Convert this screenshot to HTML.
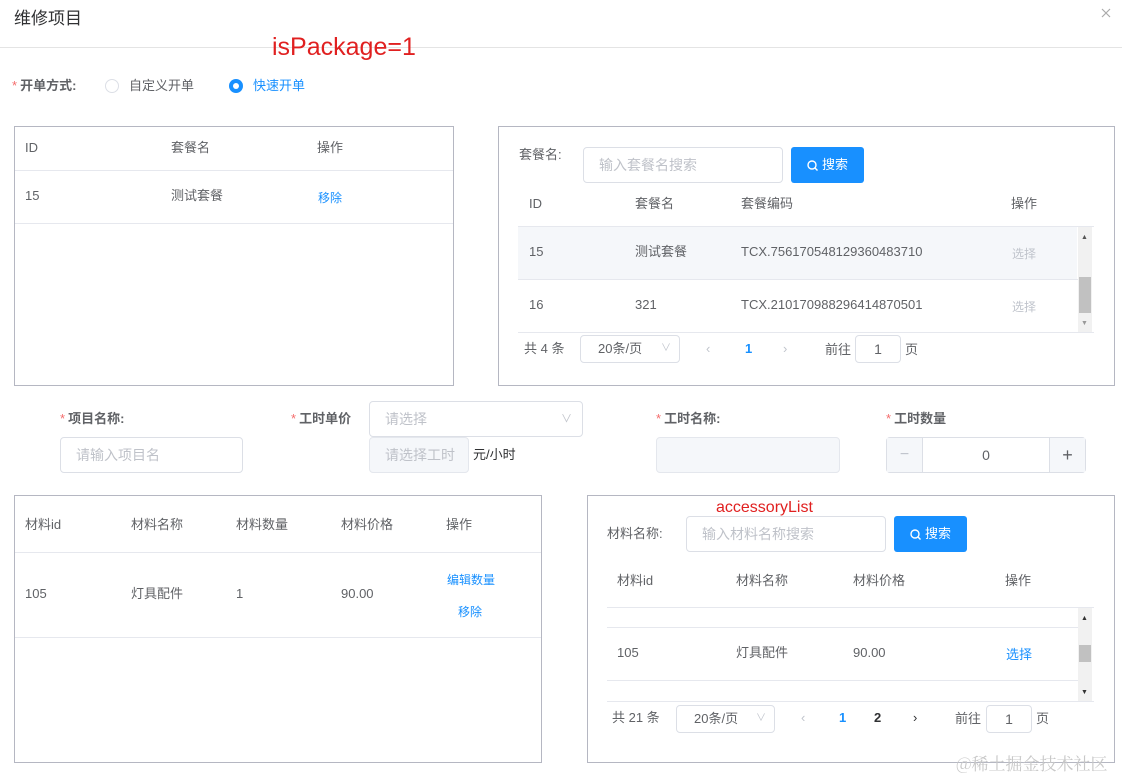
<!DOCTYPE html>
<html><head><meta charset="utf-8"><style>
*{box-sizing:border-box;margin:0;padding:0}
body{width:1122px;height:778px;background:#fff;position:relative;overflow:hidden;font-family:"Liberation Sans","Noto Sans CJK SC",sans-serif;font-size:13px;color:#606266;line-height:18px}
.a{position:absolute;white-space:nowrap;line-height:18px}
.box{position:absolute;border:1px solid #b5b7c2;background:#fff}
.hl{position:absolute;height:1px;background:#e6e8ee}
.inp{position:absolute;border:1px solid #dcdfe6;border-radius:4px;background:#fff;color:#bfc2c9;font-size:14px;display:flex;align-items:center;padding-left:15px}
.dis{background:#f5f7fa;border-color:#e4e7ed}
.btn{position:absolute;background:#1890ff;color:#fff;border-radius:3px;font-size:13px;display:flex;align-items:center;justify-content:center;gap:4px}
.lbl{font-weight:bold;color:#606266;font-size:13px}
.req{color:#f56c6c;margin-right:3px;font-weight:normal}
.blue{color:#1890ff}
.gray{color:#c0c4cc}
.sb{position:absolute;background:#f1f1f1;width:14px}
</style></head><body>
<div class="a" style="left:14px;top:8px;font-size:17px;line-height:22px;color:#303133">维修项目</div>
<svg class="a" style="left:1101px;top:8px" width="10" height="10"><path d="M1 1L9 9M9 1L1 9" stroke="#aaa" stroke-width="1.2"/></svg>
<div class="hl" style="left:0;top:47px;width:1122px;background:#e4e4e4"></div>
<div class="a" style="left:272px;top:32px;font-size:25px;line-height:30px;color:#e02020">isPackage=1</div>

<div class="a lbl" style="left:12px;top:77px"><span class="req">*</span>开单方式:</div>
<div class="a" style="left:105px;top:79px;width:14px;height:14px;border:1px solid #dcdfe6;border-radius:50%"></div>
<div class="a" style="left:129px;top:77px;font-size:13px">自定义开单</div>
<div class="a" style="left:229px;top:79px;width:14px;height:14px;border-radius:50%;background:#1890ff"><div style="position:absolute;left:4px;top:4px;width:6px;height:6px;border-radius:50%;background:#fff"></div></div>
<div class="a blue" style="left:253px;top:77px">快速开单</div>

<!-- top left -->
<div class="box" style="left:14px;top:126px;width:440px;height:260px"></div>
<div class="a" style="left:25px;top:139px">ID</div>
<div class="a" style="left:171px;top:139px">套餐名</div>
<div class="a" style="left:317px;top:139px">操作</div>
<div class="hl" style="left:15px;top:170px;width:438px"></div>
<div class="a" style="left:25px;top:187px">15</div>
<div class="a" style="left:171px;top:187px">测试套餐</div>
<div class="a blue" style="left:318px;top:189px;font-size:12px">移除</div>
<div class="hl" style="left:15px;top:223px;width:438px"></div>

<!-- top right -->
<div class="box" style="left:498px;top:126px;width:617px;height:260px"></div>
<div class="a" style="left:519px;top:146px">套餐名:</div>
<div class="inp" style="left:583px;top:147px;width:200px;height:36px">输入套餐名搜索</div>
<div class="btn" style="left:791px;top:147px;width:73px;height:36px"><svg width="11" height="11"><circle cx="5" cy="5" r="4" fill="none" stroke="#fff" stroke-width="1.4"/><path d="M8 8L10.5 10.5" stroke="#fff" stroke-width="1.4"/></svg>搜索</div>
<div class="a" style="left:529px;top:195px">ID</div>
<div class="a" style="left:635px;top:195px">套餐名</div>
<div class="a" style="left:741px;top:195px">套餐编码</div>
<div class="a" style="left:1011px;top:195px">操作</div>
<div class="hl" style="left:518px;top:226px;width:576px"></div>
<div class="a" style="left:518px;top:227px;width:559px;height:52px;background:#f5f7fa"></div>
<div class="a" style="left:529px;top:243px">15</div>
<div class="a" style="left:635px;top:243px">测试套餐</div>
<div class="a" style="left:741px;top:243px">TCX.756170548129360483710</div>
<div class="a gray" style="left:1012px;top:245px;font-size:12px">选择</div>
<div class="hl" style="left:518px;top:279px;width:560px"></div>
<div class="a" style="left:529px;top:296px">16</div>
<div class="a" style="left:635px;top:296px">321</div>
<div class="a" style="left:741px;top:296px">TCX.210170988296414870501</div>
<div class="a gray" style="left:1012px;top:298px;font-size:12px">选择</div>
<div class="hl" style="left:518px;top:332px;width:576px"></div>
<div class="sb" style="left:1078px;top:227px;height:105px"><div class="a" style="left:3px;top:2px;font-size:7px;color:#555">▲</div><div class="a" style="left:1px;top:50px;width:12px;height:36px;background:#c1c1c1"></div><div class="a" style="left:3px;top:88px;font-size:7px;color:#999">▼</div></div>
<div class="a" style="left:524px;top:340px">共 4 条</div>
<div class="inp" style="left:580px;top:335px;width:100px;height:28px;color:#606266;font-size:13px;padding-left:17px">20条/页<span style="position:absolute;right:8px;color:#c0c4cc;font-size:10px">∨</span></div>
<div class="a gray" style="left:706px;top:340px">‹</div>
<div class="a blue" style="left:745px;top:340px;font-weight:bold">1</div>
<div class="a gray" style="left:783px;top:340px">›</div>
<div class="a" style="left:825px;top:341px">前往</div>
<div class="inp" style="left:855px;top:335px;width:46px;height:28px;color:#606266;justify-content:center;padding:0">1</div>
<div class="a" style="left:905px;top:341px">页</div>

<!-- middle form -->
<div class="a lbl" style="left:60px;top:410px"><span class="req">*</span>项目名称:</div>
<div class="inp" style="left:60px;top:437px;width:183px;height:36px">请输入项目名</div>
<div class="a lbl" style="left:291px;top:410px"><span class="req">*</span>工时单价</div>
<div class="inp" style="left:369px;top:401px;width:214px;height:36px">请选择<span style="position:absolute;right:10px;font-size:11px">∨</span></div>
<div class="inp dis" style="left:369px;top:437px;width:100px;height:36px">请选择工时</div>
<div class="a" style="left:473px;top:446px;color:#303133">元/小时</div>
<div class="a lbl" style="left:656px;top:410px"><span class="req">*</span>工时名称:</div>
<div class="inp dis" style="left:656px;top:437px;width:184px;height:36px"></div>
<div class="a lbl" style="left:886px;top:410px"><span class="req">*</span>工时数量</div>
<div class="inp" style="left:886px;top:437px;width:200px;height:36px;padding:0;color:#606266;justify-content:center">0
<div class="a" style="left:0;top:0;width:36px;height:34px;background:#f5f7fa;border-right:1px solid #dcdfe6;color:#c0c4cc;font-size:16px;text-align:center;line-height:34px">−</div>
<div class="a" style="right:0;top:0;width:36px;height:34px;background:#f5f7fa;border-left:1px solid #dcdfe6;color:#606266;font-size:18px;text-align:center;line-height:34px">+</div></div>

<!-- bottom left -->
<div class="box" style="left:14px;top:495px;width:528px;height:268px"></div>
<div class="a" style="left:25px;top:516px">材料id</div>
<div class="a" style="left:131px;top:516px">材料名称</div>
<div class="a" style="left:236px;top:516px">材料数量</div>
<div class="a" style="left:341px;top:516px">材料价格</div>
<div class="a" style="left:446px;top:516px">操作</div>
<div class="hl" style="left:15px;top:552px;width:526px"></div>
<div class="a" style="left:25px;top:585px">105</div>
<div class="a" style="left:131px;top:585px">灯具配件</div>
<div class="a" style="left:236px;top:585px">1</div>
<div class="a" style="left:341px;top:585px">90.00</div>
<div class="a blue" style="left:447px;top:571px;font-size:12px">编辑数量</div>
<div class="a blue" style="left:458px;top:603px;font-size:12px">移除</div>
<div class="hl" style="left:15px;top:637px;width:526px"></div>

<!-- bottom right -->
<div class="box" style="left:587px;top:495px;width:528px;height:268px"></div>
<div class="a" style="left:716px;top:499px;font-size:16px;color:#e02020">accessoryList</div>
<div class="a" style="left:607px;top:525px">材料名称:</div>
<div class="inp" style="left:686px;top:516px;width:200px;height:36px">输入材料名称搜索</div>
<div class="btn" style="left:894px;top:516px;width:73px;height:36px"><svg width="11" height="11"><circle cx="5" cy="5" r="4" fill="none" stroke="#fff" stroke-width="1.4"/><path d="M8 8L10.5 10.5" stroke="#fff" stroke-width="1.4"/></svg>搜索</div>
<div class="a" style="left:617px;top:572px">材料id</div>
<div class="a" style="left:736px;top:572px">材料名称</div>
<div class="a" style="left:853px;top:572px">材料价格</div>
<div class="a" style="left:1005px;top:572px">操作</div>
<div class="hl" style="left:607px;top:607px;width:487px"></div>
<div class="hl" style="left:607px;top:627px;width:472px"></div>
<div class="a" style="left:617px;top:644px">105</div>
<div class="a" style="left:736px;top:644px">灯具配件</div>
<div class="a" style="left:853px;top:644px">90.00</div>
<div class="a blue" style="left:1006px;top:646px">选择</div>
<div class="hl" style="left:607px;top:680px;width:472px"></div>
<div class="hl" style="left:607px;top:701px;width:487px"></div>
<div class="sb" style="left:1078px;top:608px;height:93px"><div class="a" style="left:3px;top:2px;font-size:7px;color:#333">▲</div><div class="a" style="left:1px;top:37px;width:12px;height:17px;background:#c1c1c1"></div><div class="a" style="left:3px;top:76px;font-size:7px;color:#333">▼</div></div>
<div class="a" style="left:612px;top:709px">共 21 条</div>
<div class="inp" style="left:676px;top:705px;width:99px;height:28px;color:#606266;font-size:13px;padding-left:17px">20条/页<span style="position:absolute;right:8px;color:#c0c4cc;font-size:10px">∨</span></div>
<div class="a gray" style="left:801px;top:709px">‹</div>
<div class="a blue" style="left:839px;top:709px;font-weight:bold">1</div>
<div class="a" style="left:874px;top:709px;font-weight:bold;color:#303133">2</div>
<div class="a" style="left:913px;top:709px;color:#303133">›</div>
<div class="a" style="left:955px;top:710px">前往</div>
<div class="inp" style="left:986px;top:705px;width:46px;height:28px;color:#606266;justify-content:center;padding:0">1</div>
<div class="a" style="left:1036px;top:710px">页</div>
<div class="a" style="left:956px;top:752px;font-size:17px;line-height:22px;color:#c8c8c8;font-family:'Noto Serif CJK SC',serif">@稀土掘金技术社区</div>
</body></html>
